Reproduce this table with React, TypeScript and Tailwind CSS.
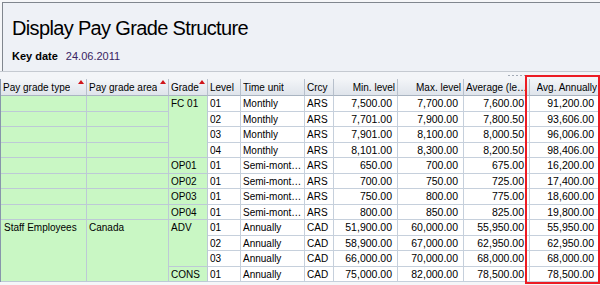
import React from 'react';

interface Row {
  type?: string;
  typeSpan?: number;
  area?: string;
  areaSpan?: number;
  grade?: string;
  gradeSpan?: number;
  level: string;
  unit: string;
  crcy: string;
  min: string;
  max: string;
  avg: string;
  annual: string;
}

const rows: Row[] = [
  { type: "", area: "", grade: "FC 01", gradeSpan: 4, level: "01", unit: "Monthly", crcy: "ARS", min: "7,500.00", max: "7,700.00", avg: "7,600.00", annual: "91,200.00" },
  { type: "", area: "", level: "02", unit: "Monthly", crcy: "ARS", min: "7,701.00", max: "7,900.00", avg: "7,800.50", annual: "93,606.00" },
  { type: "", area: "", level: "03", unit: "Monthly", crcy: "ARS", min: "7,901.00", max: "8,100.00", avg: "8,000.50", annual: "96,006.00" },
  { type: "", area: "", level: "04", unit: "Monthly", crcy: "ARS", min: "8,101.00", max: "8,300.00", avg: "8,200.50", annual: "98,406.00" },
  { type: "", area: "", grade: "OP01", level: "01", unit: "Semi-monthly", crcy: "ARS", min: "650.00", max: "700.00", avg: "675.00", annual: "16,200.00" },
  { type: "", area: "", grade: "OP02", level: "01", unit: "Semi-monthly", crcy: "ARS", min: "700.00", max: "750.00", avg: "725.00", annual: "17,400.00" },
  { type: "", area: "", grade: "OP03", level: "01", unit: "Semi-monthly", crcy: "ARS", min: "750.00", max: "800.00", avg: "775.00", annual: "18,600.00" },
  { type: "", area: "", grade: "OP04", level: "01", unit: "Semi-monthly", crcy: "ARS", min: "800.00", max: "850.00", avg: "825.00", annual: "19,800.00" },
  { type: "Staff Employees", typeSpan: 4, area: "Canada", areaSpan: 4, grade: "ADV", gradeSpan: 3, level: "01", unit: "Annually", crcy: "CAD", min: "51,900.00", max: "60,000.00", avg: "55,950.00", annual: "55,950.00" },
  { level: "02", unit: "Annually", crcy: "CAD", min: "58,900.00", max: "67,000.00", avg: "62,950.00", annual: "62,950.00" },
  { level: "03", unit: "Annually", crcy: "CAD", min: "66,000.00", max: "70,000.00", avg: "68,000.00", annual: "68,000.00" },
  { grade: "CONS", level: "01", unit: "Annually", crcy: "CAD", min: "75,000.00", max: "82,000.00", avg: "78,500.00", annual: "78,500.00" },
];

const spanClass: Record<number, string> = {
  1: "",
  3: "row-span-3",
  4: "row-span-4",
};

function SortMark() {
  return (
    <svg className="absolute right-[2px] top-[1px]" width="6" height="4" viewBox="0 0 6 4">
      <path d="M0 4 L3 0 L6 4 Z" fill="#d0141a" />
    </svg>
  );
}

function HeadCell({ label, right, sort, last }: { label: string; right?: boolean; sort?: boolean; last?: boolean }) {
  return (
    <div
      className={`relative flex items-center px-[2px] truncate border-b border-b-[#a9b4c1] bg-gradient-to-b from-[#f3f5f8] to-[#dfe4eb] ${
        last ? "" : "border-r border-r-[#b7c0cc]"
      } ${right ? "justify-end" : ""}`}
    >
      <span className="truncate">{label}</span>
      {sort && <SortMark />}
    </div>
  );
}

export default function App() {
  const green = "bg-[#c9f7c4] border-r border-b border-[#bdc9d6]";
  const white = "bg-white border-r border-b border-[#c6d0dc]";

  return (
    <div className="relative w-[600px] h-[285px] overflow-hidden bg-[#f5f6f8] font-['Liberation_Sans',Arial,sans-serif] text-black">
      {/* Title area */}
      <div className="ml-[2px] mt-[2px] h-[69px] border-l border-t border-[#80868e] bg-[#eef1f6] pl-[9px] pt-[13px]">
        <h1 className="text-[20px] leading-[24px] tracking-[-0.65px] font-normal">Display Pay Grade Structure</h1>
        <div className="mt-[10px] flex items-center text-[11px] leading-[13px]">
          <span className="font-bold">Key date</span>
          <span className="ml-[8px] text-[#3a2463]">24.06.2011</span>
        </div>
      </div>

      {/* Splitter */}
      <div className="h-[8px] border-t border-[#c5cad1] bg-[#f3f5f8] flex items-center">
        <div className="ml-[508px] flex gap-[2px]">
          {[0, 1, 2, 3, 4].map((i) => (
            <span key={i} className="w-[2px] h-[1px] bg-[#a3abb6]" />
          ))}
        </div>
      </div>

      {/* Table */}
      <div className="grid grid-cols-[86px_82px_39px_33px_64px_29px_64px_66px_66px_69px] grid-rows-[17px_16px_15px_16px_15px_16px_15px_16px_15px_16px_15px_16px_15px] border-l border-[#8796ab] text-[10px] leading-[13px] w-[599px]">
        <HeadCell label="Pay grade type" sort />
        <HeadCell label="Pay grade area" sort />
        <HeadCell label="Grade" sort />
        <HeadCell label="Level" />
        <HeadCell label="Time unit" />
        <HeadCell label="Crcy" />
        <HeadCell label="Min. level" right />
        <HeadCell label="Max. level" right />
        <HeadCell label="Average (level)" right />
        <HeadCell label="Avg. Annually" right last />

        {rows.map((r, i) => (
          <React.Fragment key={i}>
            {r.type !== undefined && (
              <div className={`${green} ${spanClass[r.typeSpan ?? 1]} px-[3px] pt-[1px]`}>{r.type}</div>
            )}
            {r.area !== undefined && (
              <div className={`${green} ${spanClass[r.areaSpan ?? 1]} px-[2px] pt-[1px]`}>{r.area}</div>
            )}
            {r.grade !== undefined && (
              <div className={`${green} ${spanClass[r.gradeSpan ?? 1]} px-[2px] pt-[1px]`}>{r.grade}</div>
            )}
            <div className={`${white} px-[2px] pt-[1px]`}>{r.level}</div>
            <div className={`${white} px-[2px] pt-[1px] truncate`}>{r.unit}</div>
            <div className={`${white} px-[2px] pt-[1px]`}>{r.crcy}</div>
            <div className={`${white} pr-[5px] pt-[1px] text-right text-[10.5px]`}>{r.min}</div>
            <div className={`${white} pr-[5px] pt-[1px] text-right text-[10.5px]`}>{r.max}</div>
            <div className={`${white} pr-[5px] pt-[1px] text-right text-[10.5px]`}>{r.avg}</div>
            <div className="bg-white border-b border-[#c6d0dc] pr-[5px] pt-[1px] text-right text-[10.5px]">{r.annual}</div>
          </React.Fragment>
        ))}
      </div>

      {/* Highlight around the annual column */}
      <div className="absolute left-[525px] top-[75px] w-[75px] h-[209px] border-2 border-[#ec1c24] pointer-events-none" />
    </div>
  );
}
